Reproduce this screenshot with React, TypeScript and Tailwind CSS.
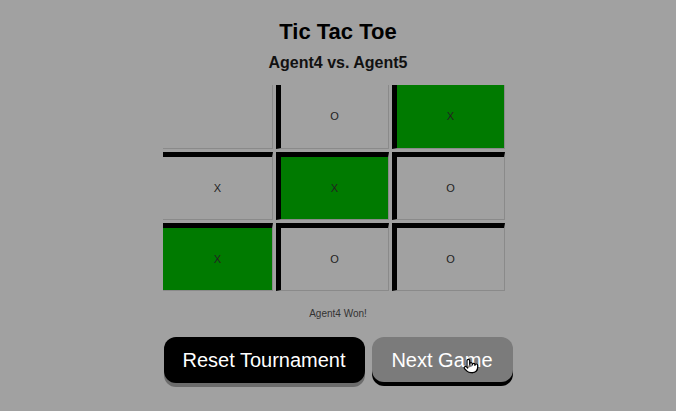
import React from "react";
import { Pointer } from "lucide-react";

const cells = [
  { v: "", win: false },
  { v: "O", win: false },
  { v: "X", win: true },
  { v: "X", win: false },
  { v: "X", win: true },
  { v: "O", win: false },
  { v: "X", win: true },
  { v: "O", win: false },
  { v: "O", win: false },
];

export default function App() {
  return (
    <main
      className="min-h-[411px] w-full bg-[#a1a1a1] flex flex-col items-center text-[#111]"
      style={{ fontFamily: '"Liberation Sans", Arial, sans-serif' }}
    >
      <h1 className="mt-[19px] text-[22px] font-bold leading-[26px] text-black">Tic Tac Toe</h1>
      <h2 className="mt-[8px] text-[16px] font-bold leading-[19px]">Agent4 vs. Agent5</h2>

      {/* Board */}
      <div className="mt-[13px] ml-[-8px] grid grid-cols-[110px_113px_113px] gap-[3px]">
        {cells.map((c, i) => {
          const row = Math.floor(i / 3);
          const col = i % 3;
          return (
            <div
              key={i}
              className={`flex items-center justify-center border-b border-r border-[#8a8a8a] text-[11px] text-[#222] ${
                c.win ? "bg-[#007a00]" : "bg-[#a1a1a1]"
              } ${row > 0 ? "border-t-[5px] border-t-black h-[68px]" : "h-[64px]"} ${
                col > 0 ? "border-l-[5px] border-l-black" : ""
              }`}
            >
              {c.v}
            </div>
          );
        })}
      </div>

      <p className="mt-[17px] text-[10px] leading-[12px] text-[#333]">Agent4 Won!</p>

      {/* Controls */}
      <div className="mt-[17px] flex gap-[7px]">
        <button className="w-[201px] h-[46px] rounded-[12px] bg-black text-white text-[20px] shadow-[0_4px_0_#6c6c6c]">
          Reset Tournament
        </button>
        <button className="relative w-[141px] h-[45px] rounded-[12px] bg-[#7b7b7b] text-white text-[20px] shadow-[0_4px_0_#000]">
          Next Game
          <Pointer
            size={16}
            className="absolute left-[91px] top-[21px] fill-white stroke-black"
            strokeWidth={1.8}
          />
        </button>
      </div>
    </main>
  );
}
